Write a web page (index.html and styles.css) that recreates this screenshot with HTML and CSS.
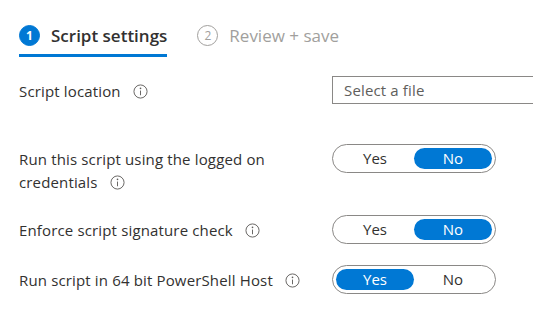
FILE: index.html
```html
<!DOCTYPE html>
<html lang="en">
<head>
  <meta charset="UTF-8">
  <title>Script settings</title>
  <link rel="stylesheet" href="styles.css">
</head>
<body>
  <nav class="steps">
    <div class="step active">
      <span class="step-num">1</span>
      <span class="step-label">Script settings</span>
    </div>
    <div class="step">
      <span class="step-num">2</span>
      <span class="step-label">Review + save</span>
    </div>
  </nav>

  <div class="form">
    <div class="row row-file">
      <label class="field-label">Script location <svg class="info" viewBox="0 0 16 16"><circle cx="8" cy="8" r="7" /><line x1="8" y1="7" x2="8" y2="12" /><circle class="dot" cx="8" cy="4.6" r="0.9" /></svg></label>
      <div class="file-input">Select a file</div>
    </div>

    <div class="row">
      <label class="field-label">Run this script using the logged on credentials <svg class="info" viewBox="0 0 16 16"><circle cx="8" cy="8" r="7" /><line x1="8" y1="7" x2="8" y2="12" /><circle class="dot" cx="8" cy="4.6" r="0.9" /></svg></label>
      <div class="toggle">
        <span class="opt">Yes</span>
        <span class="opt on">No</span>
      </div>
    </div>

    <div class="row">
      <label class="field-label">Enforce script signature check <svg class="info" viewBox="0 0 16 16"><circle cx="8" cy="8" r="7" /><line x1="8" y1="7" x2="8" y2="12" /><circle class="dot" cx="8" cy="4.6" r="0.9" /></svg></label>
      <div class="toggle">
        <span class="opt">Yes</span>
        <span class="opt on">No</span>
      </div>
    </div>

    <div class="row">
      <label class="field-label">Run script in 64 bit PowerShell Host <svg class="info" viewBox="0 0 16 16"><circle cx="8" cy="8" r="7" /><line x1="8" y1="7" x2="8" y2="12" /><circle class="dot" cx="8" cy="4.6" r="0.9" /></svg></label>
      <div class="toggle">
        <span class="opt on">Yes</span>
        <span class="opt">No</span>
      </div>
    </div>
  </div>
</body>
</html>
```

FILE: styles.css
```css
body {
  margin: 0;
  background: #ffffff;
  color: #323130;
  font-family: 'Open Sans', sans-serif;
  overflow: hidden;
}
.steps {
  display: flex;
  gap: 30px;
  padding: 25px 0 0 19px;
}
.step {
  display: flex;
  align-items: center;
  gap: 11px;
  height: 21px;
  padding-bottom: 8px;
  border-bottom: 3px solid transparent;
  color: #a19f9d;
}
.step.active {
  border-bottom-color: #0078d4;
  color: #323130;
}
.step-num {
  width: 19px;
  height: 19px;
  border: 1px solid #a19f9d;
  border-radius: 50%;
  font-size: 12px;
  display: flex;
  align-items: center;
  justify-content: center;
}
.step.active .step-num {
  background: #0078d4;
  border-color: #0078d4;
  color: #ffffff;
  font-weight: 700;
}
.step-label {
  font-size: 17px;
}
.step.active .step-label {
  font-weight: 600;
}
.form {
  padding: 19px 0 0 19px;
}
.row {
  display: grid;
  grid-template-columns: 313px 1fr;
  align-items: start;
  margin-bottom: 21px;
}
.row-file {
  margin-bottom: 40px;
}
.field-label {
  font-size: 15px;
  letter-spacing: 0.15px;
  line-height: 23px;
  padding-top: 4px;
  padding-right: 8px;
}
.info {
  width: 15px;
  height: 15px;
  margin-left: 8px;
  vertical-align: -2px;
  fill: none;
  stroke: #605e5c;
  stroke-width: 1;
}
.info .dot {
  fill: #605e5c;
  stroke: none;
}
.file-input {
  height: 26px;
  border: 1px solid #8a8886;
  border-right: none;
  padding-left: 11px;
  font-size: 15px;
  letter-spacing: 0.15px;
  line-height: 26px;
  color: #605e5c;
}
.toggle {
  width: 156px;
  height: 21px;
  padding: 3px;
  border: 1px solid #8a8886;
  border-radius: 15px;
  display: flex;
}
.opt {
  flex: 1;
  border-radius: 11px;
  font-size: 15px;
  line-height: 21px;
  text-align: center;
}
.opt.on {
  background: #0078d4;
  color: #ffffff;
}
```
